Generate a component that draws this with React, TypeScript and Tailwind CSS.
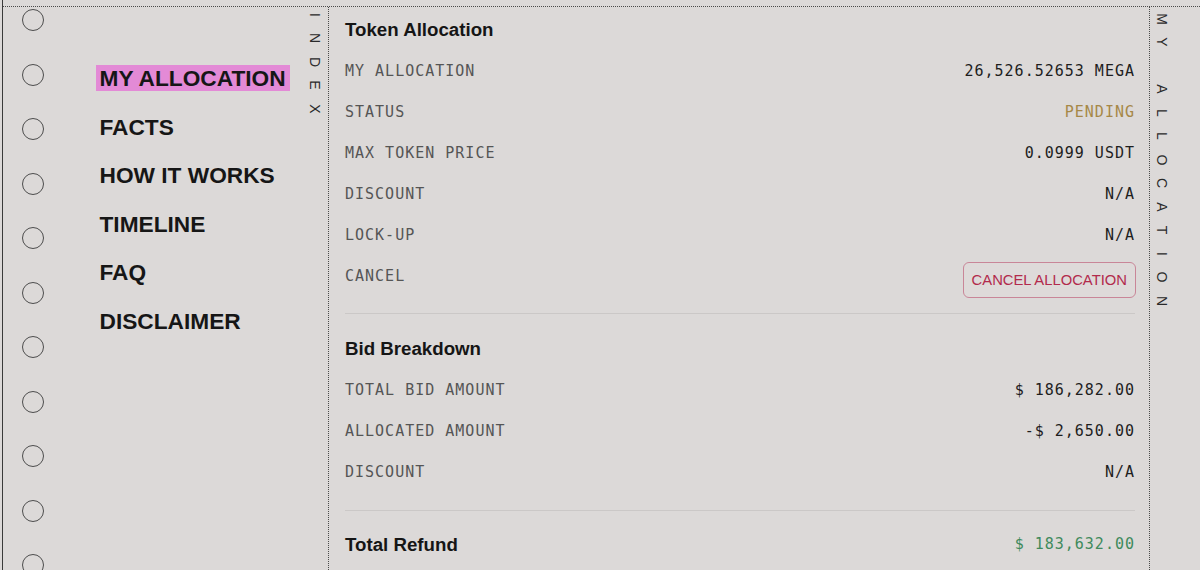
import React from "react";

const navItems = ["MY ALLOCATION", "FACTS", "HOW IT WORKS", "TIMELINE", "FAQ", "DISCLAIMER"];

const mono = "font-['DejaVu_Sans_Mono','Liberation_Mono',monospace] text-[15px] tracking-[1px]";

const VerticalLabel = ({ text }: { text: string }) => (
  <div className="flex w-[14px] flex-col items-center font-['Liberation_Sans',Arial,sans-serif] text-[14px] text-[#2a2a2a]">
    {text.split("").map((ch, i) => (
      <div key={i} className="h-[23.5px] w-[14px] flex items-center justify-center">
        <span className="inline-block rotate-90 leading-none">{ch === " " ? "\u00a0" : ch}</span>
      </div>
    ))}
  </div>
);

const Row = ({ label, value, color = "text-[#1e1e1e]" }: { label: string; value: string; color?: string }) => (
  <div className={`flex h-[28px] items-center justify-between ${mono}`}>
    <span className="text-[#555]">{label}</span>
    <span className={color}>{value}</span>
  </div>
);

const Heading = ({ children }: { children: React.ReactNode }) => (
  <div className="flex h-[28px] items-center font-['Liberation_Sans',Arial,sans-serif] text-[18.7px] font-bold text-[#151515]">
    {children}
  </div>
);

export default function App() {
  return (
    <div className="w-[1200px] h-[570px] overflow-hidden bg-[#dcd9d8]">
      <div className="ml-[2px] h-full border-l-[1.5px] border-[#3a3a3a] pt-[6px]">
        <div className="flex h-full border-t border-dotted border-[#4a4a4a]">
          {/* left: rings + index nav */}
          <div className="flex w-[326px] flex-none border-r border-dotted border-[#4a4a4a]">
            <div className="flex w-[92.5px] flex-none flex-col gap-[32.5px] pl-[18.5px] pt-[2px]">
              {Array.from({ length: 11 }).map((_, i) => (
                <div key={i} className="h-[22px] w-[22px] flex-none rounded-full border-[1.5px] border-[#4d4d4d]" />
              ))}
            </div>
            <div className="flex flex-1 flex-col gap-[22.6px] pt-[58px] font-['Liberation_Sans',Arial,sans-serif] text-[22.7px] font-bold text-[#161616]">
              {navItems.map((item, i) => (
                <div key={item} className="leading-[26px]">
                  <span className={i === 0 ? "bg-[#e38ad6] px-1" : "px-1"}>{item}</span>
                </div>
              ))}
            </div>
            <div className="-mt-[4px] mr-[6px] w-[14px] flex-none">
              <VerticalLabel text="INDEX" />
            </div>
          </div>

          {/* main */}
          <div className="w-[821px] flex-none border-r border-dotted border-[#4a4a4a] pl-4 pr-[14px] pt-[9px]">
            <div className="flex flex-col gap-[13px]">
              <Heading>Token Allocation</Heading>
              <Row label="MY ALLOCATION" value="26,526.52653 MEGA" />
              <Row label="STATUS" value="PENDING" color="text-[#a68847]" />
              <Row label="MAX TOKEN PRICE" value="0.0999 USDT" />
              <Row label="DISCOUNT" value="N/A" />
              <Row label="LOCK-UP" value="N/A" />
              <div className={`flex items-start justify-between ${mono}`}>
                <span className="leading-[28px] text-[#555]">CANCEL</span>
                <button className="mr-[-1px] h-[36px] rounded-md border border-[#c98698] bg-[#dedad9] px-[8px] font-['Liberation_Sans',Arial,sans-serif] text-[14.8px] tracking-normal text-[#b22a4c]">
                  CANCEL ALLOCATION
                </button>
              </div>
            </div>
            <div className="mt-[15px] h-px bg-[#cbc8c7]" />
            <div className="mt-[21px] flex flex-col gap-[13px]">
              <Heading>Bid Breakdown</Heading>
              <Row label="TOTAL BID AMOUNT" value="$ 186,282.00" />
              <Row label="ALLOCATED AMOUNT" value="-$ 2,650.00" />
              <Row label="DISCOUNT" value="N/A" />
            </div>
            <div className="mt-[24px] h-px bg-[#cbc8c7]" />
            <div className="mt-[19px] flex h-[28px] items-center justify-between">
              <span className="font-['Liberation_Sans',Arial,sans-serif] text-[18.7px] font-bold text-[#151515] pt-[3px]">Total Refund</span>
              <span className={`${mono} text-[#3f8a5c]`}>$ 183,632.00</span>
            </div>
          </div>

          {/* right */}
          <div className="flex-1 pl-[5px]">
            <VerticalLabel text="MY ALLOCATION" />
          </div>
        </div>
      </div>
    </div>
  );
}
